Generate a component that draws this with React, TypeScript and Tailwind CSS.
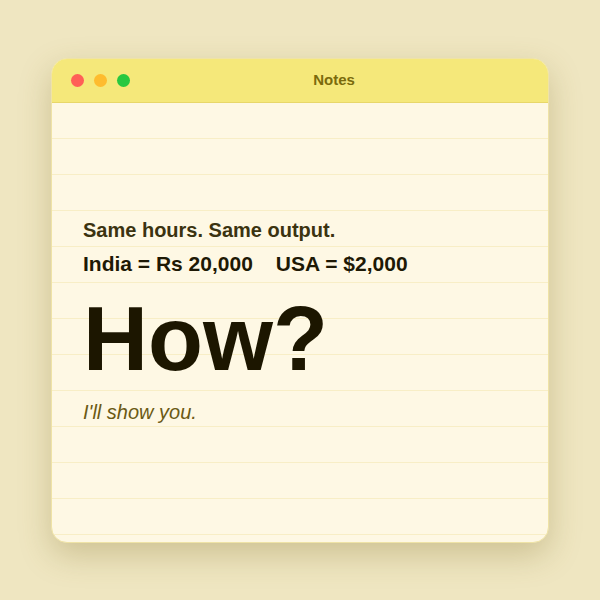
export default function App() {
  return (
    <div
      className="flex min-h-screen justify-center bg-[#efe6c1] pt-[58px]"
      style={{ fontFamily: '"Liberation Sans", Arial, sans-serif' }}
    >
      <div className="h-fit w-[498px] overflow-hidden rounded-[16px] border border-[#efe3a6] bg-[#fef8e4] shadow-[0_12px_32px_rgba(120,100,30,0.28)]">
        {/* title bar */}
        <div className="flex h-[44px] items-center border-b border-[#e8d769] bg-[#f5e87a] pl-[19px]">
          <div className="flex gap-[10px]">
            <span className="h-[13px] w-[13px] rounded-full bg-[#ff5f57]" />
            <span className="h-[13px] w-[13px] rounded-full bg-[#febc2e]" />
            <span className="h-[13px] w-[13px] rounded-full bg-[#28c840]" />
          </div>
          <div className="flex-1 pr-[10px] text-center text-[15px] font-bold text-[#7a6a0c]">Notes</div>
        </div>

        {/* ruled page */}
        <div className="h-[439px] bg-[repeating-linear-gradient(to_bottom,transparent_0px,transparent_35px,#f8eec6_35px,#f8eec6_36px)] px-[31px] pt-[113px]">
          <p className="text-[20px] font-bold leading-[28px] text-[#3b3310]">Same hours. Same output.</p>
          <p className="mt-[6px] flex gap-[23px] text-[21px] font-bold leading-[28px] text-[#1e1905]">
            <span>India = Rs 20,000</span>
            <span>USA = $2,000</span>
          </p>
          <h1 className="mt-[16px] text-[90px] font-bold leading-[90px] text-[#1c1600]">How?</h1>
          <p className="mt-[14px] text-[20px] italic leading-[28px] text-[#6b5a14]">I'll show you.</p>
        </div>
      </div>
    </div>
  );
}
